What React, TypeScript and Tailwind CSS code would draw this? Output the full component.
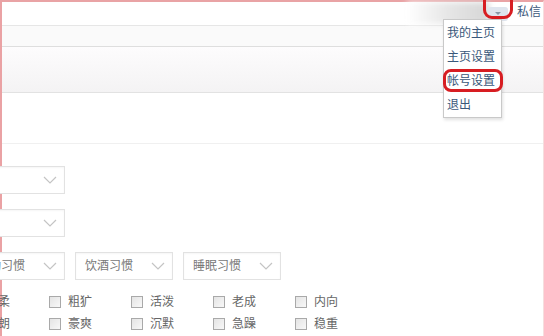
import * as React from 'react';

const FONT = '[font-family:"Liberation_Sans","Noto_Sans_CJK_SC",sans-serif]';

function Chevron() {
  return (
    <svg width="14" height="8" viewBox="0 0 14 8" className="shrink-0">
      <path d="M1 1 L7 7 L13 1" fill="none" stroke="#c4c4c4" strokeWidth="1.2" />
    </svg>
  );
}

function Select({ label, className = '' }: { label?: string; className?: string }) {
  return (
    <div
      className={`flex items-center justify-between w-[98px] h-[28px] border border-[#e2e2e2] bg-white pl-[9px] pr-[7px] text-[12px] text-[#777] shadow-[inset_0_1px_2px_rgba(0,0,0,0.04)] ${className}`}
    >
      <span>{label}</span>
      <Chevron />
    </div>
  );
}

function Check({ label }: { label: string }) {
  return (
    <div className="flex items-center w-[82px] shrink-0">
      <span className="w-[12px] h-[12px] border border-[#a9a9a9] bg-gradient-to-br from-[#e4e4e4] to-[#f8f8f8] shrink-0" />
      <span className="ml-[7px] text-[12px] text-[#666]">{label}</span>
    </div>
  );
}

const rowA = ['温柔', '粗犷', '活泼', '老成', '内向'];
const rowB = ['开朗', '豪爽', '沉默', '急躁', '稳重'];

export default function App() {
  return (
    <div className={`relative w-[544px] h-[336px] overflow-hidden bg-white ${FONT}`}>
      <div className="h-full border-t-2 border-l-2 border-r border-t-[#e9a3a5] border-l-[#eaa2a4] border-r-[#f6dede]">
        {/* top bar */}
        <div className="relative h-[24px] border-b border-[#e6e6e6] flex items-center justify-end">
          <div className="absolute left-[405px] top-0 w-[82px] h-[22px] bg-gradient-to-r from-white via-[#e6e6e6] to-[#d6d6d6] blur-[3px]" />
          <div className="relative mr-[35px] w-[20px] h-[14px] rounded-[3px] bg-[#dfe5ee] flex items-center justify-center">
            <span className="w-0 h-0 border-l-[3px] border-r-[3px] border-t-[3px] border-l-transparent border-r-transparent border-t-[#8a98a8]" />
          </div>
          <span className="absolute left-[515px] top-[1px] text-[12px] text-[#3d5a7c]">私信</span>
        </div>
        <div className="h-[21px] bg-[#fafafa] border-b border-[#dedede]" />
        <div className="h-[46px] bg-gradient-to-b from-[#fdfcfd] to-[#f4f3f4] border-b border-[#e2e2e2]" />
        <div className="h-[51px] bg-white border-b border-[#f0f0f0]" />

        {/* form */}
        <div className="-ml-[35px] pt-[22px] flex flex-col gap-[15px]">
          <Select className="h-[27px]" />
          <Select />
          <div className="flex gap-[10px]">
            <Select label="运动习惯" />
            <Select label="饮酒习惯" />
            <Select label="睡眠习惯" />
          </div>
        </div>
        <div className="-ml-[35px] mt-[11px] flex flex-col">
          <div className="flex h-[22px]">
            {rowA.map(l => <Check key={l} label={l} />)}
          </div>
          <div className="flex h-[22px]">
            {rowB.map(l => <Check key={l} label={l} />)}
          </div>
        </div>
      </div>

      {/* red ring around arrow button */}
      <div className="absolute left-[483px] -top-[8px] w-[30px] h-[27px] border-[3px] border-[#d71d22] rounded-[9px]" />

      {/* dropdown menu */}
      <div className="absolute left-[443px] top-[19px] w-[59px] h-[99px] border border-[#c9c9c9] bg-white shadow-[1px_2px_3px_rgba(0,0,0,0.12)] pt-[1px]">
        {['我的主页', '主页设置', '帐号设置', '退出'].map(t => (
          <div key={t} className="h-[24px] flex items-center pl-[3px] text-[12px] text-[#3a587a]">{t}</div>
        ))}
      </div>

      {/* red ring around 帐号设置 */}
      <div className="absolute left-[443px] top-[69px] w-[60px] h-[23px] border-[3px] border-[#d71d22] rounded-[8px]" />
    </div>
  );
}
